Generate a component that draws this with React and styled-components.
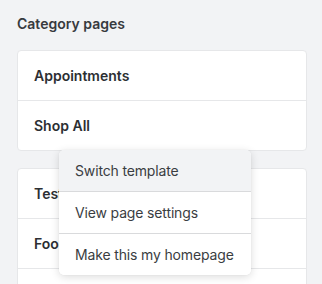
import React from "react";
import styled, { createGlobalStyle } from "styled-components";

const Global = createGlobalStyle`
  html, body { margin: 0; padding: 0; background: #f2f3f5; }
  body { font-family: Inter, "Noto Sans", "Liberation Sans", sans-serif; -webkit-font-smoothing: antialiased; }
`;

const Page = styled.div`
  position: relative;
  width: 322px;
  height: 284px;
  overflow: hidden;
  box-sizing: border-box;
  padding: 14px 15px 0 17px;
`;

const Title = styled.h2`
  margin: 0 0 16px 0;
  font-size: 14px;
  line-height: 20px;
  font-weight: 600;
  color: #373a3e;
`;

const Card = styled.div`
  background: #fff;
  border: 1px solid #e6e7e9;
  border-radius: 4px;
  margin-bottom: 17px;
  overflow: hidden;
`;

const Row = styled.div`
  height: 49px;
  display: flex;
  align-items: center;
  padding: 0 16px;
  font-size: 14px;
  font-weight: 600;
  color: #2c2f33;
  & + & { border-top: 1px solid #e6e7e9; }
`;

const Menu = styled.div`
  position: absolute;
  left: 59px;
  top: 150px;
  width: 192px;
  background: #fff;
  border-radius: 5px;
  box-shadow: 0 2px 8px rgba(0, 0, 0, 0.14), 0 0 1px rgba(0, 0, 0, 0.12);
  overflow: hidden;
`;

const Item = styled.div`
  height: 41px;
  display: flex;
  align-items: center;
  padding: 0 16px;
  font-size: 14px;
  letter-spacing: -0.15px;
  white-space: nowrap;
  color: #3a3d42;
  background: ${(p) => (p.$active ? "#f2f3f5" : "#fff")};
  & + & { border-top: 1px solid #d9dadc; }
`;

export default function App() {
  return (
    <>
      <Global />
      <Page>
        <Title>Category pages</Title>
        <Card>
          <Row>Appointments</Row>
          <Row>Shop All</Row>
        </Card>
        <Card>
          <Row>Test</Row>
          <Row>Food</Row>
          <Row>Drinks</Row>
        </Card>
        <Menu>
          <Item $active>Switch template</Item>
          <Item>View page settings</Item>
          <Item>Make this my homepage</Item>
        </Menu>
      </Page>
    </>
  );
}
